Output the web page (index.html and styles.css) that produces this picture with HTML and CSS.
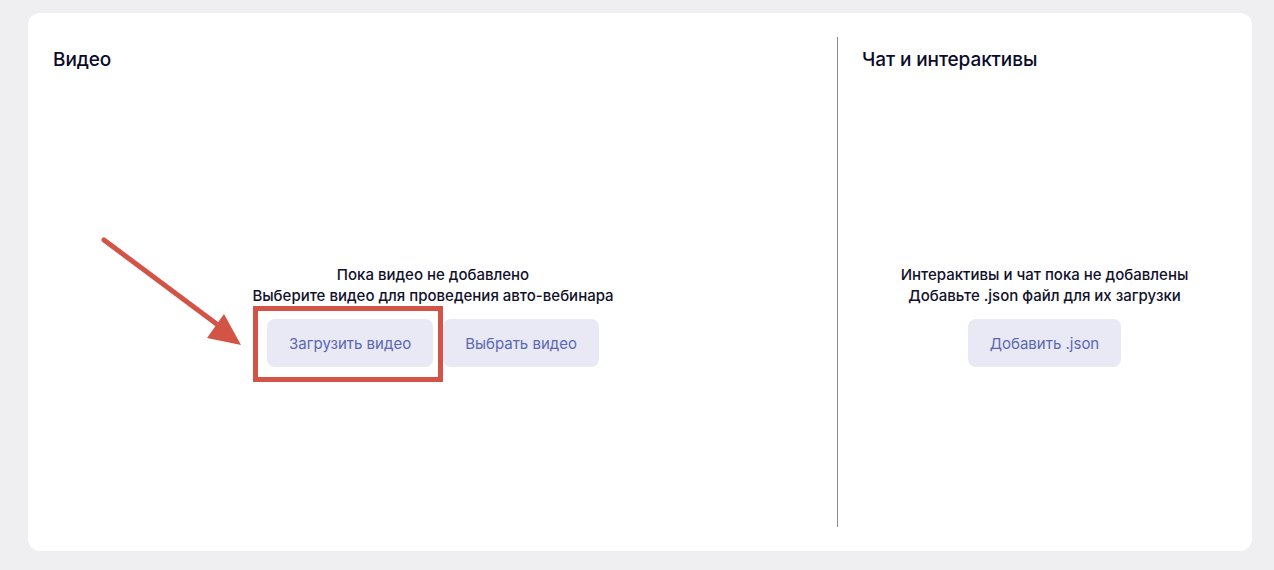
FILE: index.html
```html
<!DOCTYPE html>
<html lang="ru">
  <head>
    <meta charset="UTF-8" />
    <meta name="viewport" content="width=device-width, initial-scale=1.0" />
    <title>Авто-вебинар</title>
    <link rel="stylesheet" href="styles.css">
  </head>
  <body>
    <!-- Panel -->
    <div class="panel">
      <section class="column column-video">
        <h2 class="column-title">Видео</h2>
        <div class="empty">
          <p class="empty-text">Пока видео не добавлено<br>Выберите видео для проведения авто-вебинара</p>
          <div class="empty-actions">
            <button class="btn">Загрузить видео</button>
            <button class="btn">Выбрать видео</button>
          </div>
        </div>
      </section>

      <div class="divider"></div>

      <section class="column">
        <h2 class="column-title">Чат и интерактивы</h2>
        <div class="empty">
          <p class="empty-text">Интерактивы и чат пока не добавлены<br>Добавьте .json файл для их загрузки</p>
          <div class="empty-actions">
            <button class="btn">Добавить .json</button>
          </div>
        </div>
      </section>
    </div>

    <!-- Annotation -->
    <svg class="annotation" width="1274" height="570" viewBox="0 0 1274 570">
      <line x1="104" y1="240" x2="222" y2="328" stroke="#d35446" stroke-width="5" stroke-linecap="round" />
      <polygon points="241,345 207,338 224,314" fill="#d35446" />
      <rect x="255.5" y="308.5" width="185" height="71" fill="none" stroke="#d35446" stroke-width="5" />
    </svg>
  </body>
</html>
```

FILE: styles.css
```css
/* Reset and base styles */
* {
  margin: 0;
  padding: 0;
  box-sizing: border-box;
  font-family: Inter, "Noto Sans", sans-serif;
}

body {
  background-color: #efeff1;
  padding: 13px 22px 19px 28px;
  height: 570px;
  overflow: hidden;
}

/* Panel */
.panel {
  background-color: #ffffff;
  border-radius: 12px;
  height: 538px;
  padding: 24px 25px;
  display: grid;
  grid-template-columns: 760px 1px 1fr;
  column-gap: 24px;
}

.column {
  display: flex;
  flex-direction: column;
}

.column-title {
  margin-top: 11px;
  font-size: 19px;
  line-height: 24px;
  font-weight: 500;
  letter-spacing: -0.1px;
  color: #0c0c2a;
}

.divider {
  background-color: #8a8a8e;
}

/* Empty state */
.empty {
  margin-top: 192px;
  display: flex;
  flex-direction: column;
  align-items: center;
}

.empty-text {
  text-align: center;
  font-size: 15px;
  line-height: 21px;
  font-weight: 500;
  color: #11112b;
}

.empty-actions {
  display: flex;
  gap: 10px;
  margin-top: 13px;
}

.btn {
  height: 48px;
  padding: 0 22px;
  border: none;
  border-radius: 8px;
  background-color: #e8e9f5;
  color: #5b67b4;
  font-size: 15px;
  font-weight: 400;
  cursor: pointer;
}

/* Annotation overlay */
.annotation {
  position: absolute;
  top: 0;
  left: 0;
  pointer-events: none;
}
```
